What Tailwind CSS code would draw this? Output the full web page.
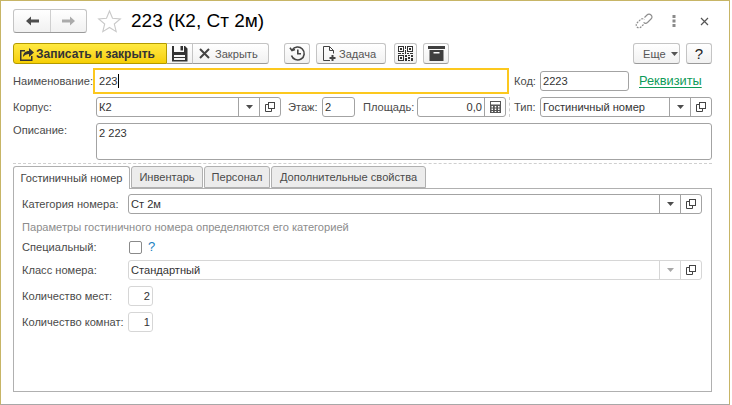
<!DOCTYPE html>
<html lang="ru"><head><meta charset="utf-8">
<script src="https://cdn.jsdelivr.net/npm/@tailwindcss/browser@4"></script>
<title>223</title></head>
<body class="m-0 bg-white">
<div class="w-[732px] h-[405px] overflow-hidden relative bg-white font-['Liberation_Sans',Arial,sans-serif] text-[11.1px] leading-[14px] text-[#4a4a4a]">
 <div class="w-[730px] h-[405px] border-l border-r border-t border-b border-l-[#c7b566] border-r-[#c7b566] border-t-[#c7b566] border-b-[#a8a8a8] pl-3 pr-[17px]">

  <!-- title -->
  <div class="flex items-center h-[24px] mt-[8px]">
   <div class="flex w-[74px] h-[24px] rounded-[3px] border border-[#c4c4c4] border-b-[#9a9a9a] bg-gradient-to-b from-white to-[#f1f1f1]">
    <div class="w-[37px] flex items-center justify-center border-r border-[#cfcfcf]">
     <svg width="15" height="12" viewBox="0 0 15 12"><path d="M1 6 L6 1.5 V4.5 H14 V7.5 H6 V10.5 Z" fill="#4d4d4d"/></svg>
    </div>
    <div class="flex-1 flex items-center justify-center">
     <svg width="15" height="12" viewBox="0 0 15 12"><path d="M14 6 L9 1.5 V4.5 H1 V7.5 H9 V10.5 Z" fill="#ababab"/></svg>
    </div>
   </div>
   <svg class="ml-[10px]" width="25" height="24" viewBox="0 0 25 24"><path d="M12.5 2 L15.5 9.3 L23.3 9.9 L17.3 15 L19.2 22.6 L12.5 18.5 L5.8 22.6 L7.7 15 L1.7 9.9 L9.5 9.3 Z" fill="#fff" stroke="#c9c9c9" stroke-width="1.1"/></svg>
   <div class="ml-[9px] text-[19px] leading-[24px] text-black whitespace-nowrap">223 (К2, Ст 2м)</div>
   <div class="ml-auto flex items-center mr-[3px]">
    <svg width="18" height="18" viewBox="0 0 18 18" fill="none" stroke="#8c8c8c" stroke-width="1.1"><path d="M9.5 5.5 L12 3 A2.8 2.8 0 0 1 16 7 L12.5 10.5 A2.8 2.8 0 0 1 8.6 10.4"/><path d="M8.5 12.5 L6 15 A2.8 2.8 0 0 1 2 11 L5.5 7.5 A2.8 2.8 0 0 1 9.4 7.6" stroke-dasharray="2 1"/></svg>
    <svg class="ml-[19px]" width="4" height="12" viewBox="0 0 4 12" fill="#8a8a8a"><rect x="0.5" y="0" width="3" height="3"/><rect x="0.5" y="4.5" width="3" height="3"/><rect x="0.5" y="9" width="3" height="3"/></svg>
    <svg class="ml-[24px]" width="9" height="9" viewBox="0 0 9 9" stroke="#555" stroke-width="1.2"><path d="M1 1 L8 8 M8 1 L1 8"/></svg>
   </div>
  </div>

  <!-- toolbar -->
  <div class="flex items-stretch h-[21px] mt-[10px]">
   <div class="w-[154px] flex items-center rounded-l-[3px] border border-[#b39a00] bg-gradient-to-b from-[#ffe93f] to-[#f6cf00] text-[#333] font-bold pl-[4px] text-[12px]">
    <svg width="17" height="17" viewBox="0 0 17 17"><path d="M2 5 H7 V6.5 H3.5 V14.5 H13 V11 H14.5 V16 H2 Z" fill="#333"/><path d="M5 12 C5 8 7.5 6 11 6 V3 L16 7.5 L11 12 V9 C8.5 9 6.5 10 5 12 Z" fill="#333"/></svg>
    <span class="ml-[1px] whitespace-nowrap">Записать и закрыть</span>
   </div>
   <div class="w-[26px] flex items-center justify-center border-y border-r border-[#c4c4c4] border-b-[#9a9a9a] bg-gradient-to-b from-white to-[#f1f1f1]">
    <svg width="17" height="17" viewBox="0 0 17 17"><path d="M1 1 H3 V7 H13 V1 H14 L16.5 3.5 V16.5 H1 Z M9.5 1 H12 V5.5 H9.5 Z M3 10 V12 H14 V10 Z M3 13 V15 H14 V13 Z" fill="#333" fill-rule="evenodd"/></svg>
   </div>
   <div class="w-[76px] flex items-center border-y border-r border-[#c4c4c4] border-b-[#9a9a9a] rounded-r-[3px] bg-gradient-to-b from-white to-[#f1f1f1] pl-[6px]">
    <svg width="11" height="11" viewBox="0 0 11 11" stroke="#444" stroke-width="2"><path d="M1 1 L10 10 M10 1 L1 10"/></svg>
    <span class="ml-[5px] text-[#555]">Закрыть</span>
   </div>
   <div class="ml-[15px] w-[26px] flex items-center justify-center rounded-[3px] border border-[#c4c4c4] border-b-[#9a9a9a] bg-gradient-to-b from-white to-[#f1f1f1]">
    <svg width="17" height="17" viewBox="0 0 17 17" fill="none" stroke="#444" stroke-width="1.6"><path d="M3.2 5 A6.5 6.5 0 1 1 2.5 10.5"/><path d="M1 2.8 L3 5.6 L6 4.6"/><path d="M8.8 4.5 V8.8 H12"/></svg>
   </div>
   <div class="ml-[6px] w-[70px] flex items-center rounded-[3px] border border-[#c4c4c4] border-b-[#9a9a9a] bg-gradient-to-b from-white to-[#f1f1f1] pl-[5px]">
    <svg width="14" height="17" viewBox="0 0 14 17" fill="none" stroke="#444"><path d="M8 15.5 H1.5 V1.5 H7.5 L11.5 5.5 V8.5"/><path d="M7.5 1.5 V5.5 H11.5"/><path d="M10.5 10 V16 M7.5 13 H13.5" stroke-width="2"/></svg>
    <span class="ml-[3px] text-[#555]">Задача</span>
   </div>
   <div class="ml-[8px] w-[23px] flex items-center justify-center rounded-[3px] border border-[#c4c4c4] border-b-[#9a9a9a] bg-gradient-to-b from-white to-[#f1f1f1]">
    <svg width="15" height="15" viewBox="0 0 15 15" fill="#333"><path d="M0 0 H6 V6 H0 Z M1 1 V5 H5 V1 Z M2 2 H4 V4 H2 Z M9 0 H15 V6 H9 Z M10 1 V5 H14 V1 Z M11 2 H13 V4 H11 Z M0 9 H6 V15 H0 Z M1 10 V14 H5 V10 Z M2 11 H4 V13 H2 Z" fill-rule="evenodd"/><path d="M7 0 H8 V3 H7 Z M7 4 H8 V8 H7 Z M0 7 H3 V8 H0 Z M4 7 H6 V8 H4 Z M9 7 H11 V8 H9 Z M12 7 H15 V8 H12 Z M7 9 H9 V11 H7 Z M10 9 H12 V10 H10 Z M13 9 H15 V11 H13 Z M10 11 H12 V13 H10 Z M7 12 H9 V15 H7 Z M13 12 H15 V15 H13 Z M10 14 H12 V15 H10 Z"/></svg>
   </div>
   <div class="ml-[6px] w-[26px] flex items-center justify-center rounded-[3px] border border-[#c4c4c4] border-b-[#9a9a9a] bg-gradient-to-b from-white to-[#f1f1f1]">
    <svg width="17" height="15" viewBox="0 0 17 15" fill="#3f3f3f"><rect x="0" y="0" width="17" height="3"/><path d="M1.5 4 H15.5 V15 H1.5 Z M5.5 6 V7.5 H11.5 V6 Z" fill-rule="evenodd"/></svg>
   </div>
   <div class="ml-auto w-[47px] flex items-center rounded-[3px] border border-[#c4c4c4] border-b-[#9a9a9a] bg-gradient-to-b from-white to-[#f1f1f1] pl-[9px] text-[#555]">
    Еще<svg class="ml-[5px]" width="7" height="4" viewBox="0 0 7 4" fill="#555"><path d="M0 0 H7 L3.5 4 Z"/></svg>
   </div>
   <div class="ml-[6px] w-[26px] flex items-center justify-center rounded-[3px] border border-[#c4c4c4] border-b-[#9a9a9a] bg-gradient-to-b from-white to-[#f1f1f1] text-[15px] text-[#222]">?</div>
  </div>

  <!-- name row -->
  <div class="flex items-center h-[26px] mt-[4px]">
   <span class="w-[80px] shrink-0 whitespace-nowrap">Наименование:</span>
   <div class="w-[416px] h-[26px] border-2 border-[#fcc81e] flex items-center pl-[4px] text-[#333]">223<span class="w-px h-[14px] bg-black"></span></div>
   <span class="ml-[5px] w-[26px]">Код:</span>
   <div class="w-[89px] h-[20px] rounded-[3px] border border-[#a3a3a3] flex items-center pl-[2px] text-[#333]">2223</div>
   <span class="ml-[10px] text-[12.8px] text-[#0e9b58] underline underline-offset-2">Реквизиты</span>
  </div>

  <!-- korpus row -->
  <div class="flex items-center h-[20px] mt-[3px]">
   <span class="w-[83px] shrink-0">Корпус:</span>
   <div class="w-[185px] h-[20px] rounded-[3px] border border-[#a3a3a3] flex items-center text-[#333]">
    <span class="flex-1 pl-[2px]">К2</span>
    <span class="w-[21px] h-full border-l border-[#a3a3a3] flex items-center justify-center"><svg width="7" height="4" viewBox="0 0 7 4" fill="#4d4d4d"><path d="M0 0 H7 L3.5 4 Z"/></svg></span>
    <span class="w-[21px] h-full border-l border-[#a3a3a3] flex items-center justify-center"><svg width="10" height="10" viewBox="0 0 10 10" fill="none" stroke="#444"><rect x="3.5" y="0.5" width="6" height="6"/><path d="M3.5 2.5 H0.5 V9.5 H6.5 V6.5"/></svg></span>
   </div>
   <span class="ml-[7px] w-[34px]">Этаж:</span>
   <div class="w-[33px] h-[20px] rounded-[3px] border border-[#a3a3a3] flex items-center pl-[2px] text-[#333]">2</div>
   <span class="ml-[8px] w-[54px]">Площадь:</span>
   <div class="w-[89px] h-[20px] rounded-[3px] border border-[#a3a3a3] flex items-center text-[#333]">
    <span class="flex-1 text-right pr-[2px]">0,0</span>
    <span class="w-[21px] h-full border-l border-[#a3a3a3] flex items-center justify-center"><svg width="11" height="12" viewBox="0 0 11 12" fill="#555"><path d="M0 0 H11 V12 H0 Z M1 1 V3.5 H10 V1 Z M1.5 5 V6.5 H3 V5 Z M4.75 5 V6.5 H6.25 V5 Z M8 5 V6.5 H9.5 V5 Z M1.5 7.5 V9 H3 V7.5 Z M4.75 7.5 V9 H6.25 V7.5 Z M8 7.5 V9 H9.5 V7.5 Z M1.5 10 V11 H3 V10 Z M4.75 10 V11 H6.25 V10 Z M8 10 V11 H9.5 V10 Z" fill-rule="evenodd"/></svg></span>
   </div>
   <span class="ml-[3px] h-[20px] border-l border-dashed border-[#cfcfcf]"></span>
   <span class="ml-[4px] w-[26px]">Тип:</span>
   <div class="w-[172px] h-[20px] rounded-[3px] border border-[#a3a3a3] flex items-center text-[#333]">
    <span class="flex-1 pl-[2px] whitespace-nowrap">Гостиничный номер</span>
    <span class="w-[21px] h-full border-l border-[#a3a3a3] flex items-center justify-center"><svg width="7" height="4" viewBox="0 0 7 4" fill="#4d4d4d"><path d="M0 0 H7 L3.5 4 Z"/></svg></span>
    <span class="w-[21px] h-full border-l border-[#a3a3a3] flex items-center justify-center"><svg width="10" height="10" viewBox="0 0 10 10" fill="none" stroke="#444"><rect x="3.5" y="0.5" width="6" height="6"/><path d="M3.5 2.5 H0.5 V9.5 H6.5 V6.5"/></svg></span>
   </div>
  </div>

  <!-- description -->
  <div class="flex h-[37px] mt-[6px]">
   <span class="w-[83px] shrink-0">Описание:</span>
   <div class="flex-1 rounded-[3px] border border-[#a3a3a3] pl-[2px] pt-[2px] text-[#333]">2 223</div>
  </div>
  <div class="border-t border-dashed border-[#cfcfcf] mt-[3px]"></div>

  <!-- tabs -->
  <div class="flex h-[23px] mt-[2px] relative z-10 -mb-px">
   <div class="w-[117px] rounded-t-[3px] border border-b-0 border-[#b0b0b0] bg-white flex items-center justify-center text-[#444]">Гостиничный номер</div>
   <div class="ml-px w-[72px] h-[22px] rounded-t-[3px] border border-[#b0b0b0] bg-[#ececec] flex items-center justify-center">Инвентарь</div>
   <div class="ml-px w-[66px] h-[22px] rounded-t-[3px] border border-[#b0b0b0] bg-[#ececec] flex items-center justify-center">Персонал</div>
   <div class="ml-px w-[155px] h-[22px] rounded-t-[3px] border border-[#b0b0b0] bg-[#ececec] flex items-center justify-center whitespace-nowrap">Дополнительные свойства</div>
  </div>

  <!-- panel -->
  <div class="w-[699px] h-[204px] border border-[#b0b0b0] pl-[8px] pr-[9px] pt-[5px]">
   <div class="flex items-center h-[20px]">
    <span class="w-[106px] shrink-0">Категория номера:</span>
    <div class="flex-1 h-[20px] rounded-[3px] border border-[#a3a3a3] flex items-center text-[#333]">
     <span class="flex-1 pl-[2px]">Ст 2м</span>
     <span class="w-[21px] h-full border-l border-[#a3a3a3] flex items-center justify-center"><svg width="7" height="4" viewBox="0 0 7 4" fill="#4d4d4d"><path d="M0 0 H7 L3.5 4 Z"/></svg></span>
     <span class="w-[21px] h-full border-l border-[#a3a3a3] flex items-center justify-center"><svg width="10" height="10" viewBox="0 0 10 10" fill="none" stroke="#444"><rect x="3.5" y="0.5" width="6" height="6"/><path d="M3.5 2.5 H0.5 V9.5 H6.5 V6.5"/></svg></span>
    </div>
   </div>
   <div class="mt-[6px] h-[14px] text-[#8c8c8c] whitespace-nowrap">Параметры гостиничного номера определяются его категорией</div>
   <div class="flex items-center h-[14px] mt-[6px]">
    <span class="w-[107px] shrink-0">Специальный:</span>
    <span class="w-[13px] h-[13px] rounded-[2px] border border-[#8a8a8a]"></span>
    <span class="ml-[6px] text-[#1a7fc0] text-[13px]">?</span>
   </div>
   <div class="flex items-center h-[20px] mt-[6px]">
    <span class="w-[106px] shrink-0">Класс номера:</span>
    <div class="flex-1 h-[20px] rounded-[3px] border border-[#d6d6d6] flex items-center text-[#333]">
     <span class="flex-1 pl-[2px]">Стандартный</span>
     <span class="w-[21px] h-full border-l border-[#d6d6d6] flex items-center justify-center"><svg width="7" height="4" viewBox="0 0 7 4" fill="#a8a8a8"><path d="M0 0 H7 L3.5 4 Z"/></svg></span>
     <span class="w-[21px] h-full border-l border-[#d6d6d6] flex items-center justify-center"><svg width="10" height="10" viewBox="0 0 10 10" fill="none" stroke="#444"><rect x="3.5" y="0.5" width="6" height="6"/><path d="M3.5 2.5 H0.5 V9.5 H6.5 V6.5"/></svg></span>
    </div>
   </div>
   <div class="flex items-center h-[20px] mt-[6px]">
    <span class="w-[106px] shrink-0">Количество мест:</span>
    <div class="w-[25px] h-[20px] rounded-[3px] border border-[#d6d6d6] flex items-center justify-end pr-[2px] text-[#333]">2</div>
   </div>
   <div class="flex items-center h-[20px] mt-[6px]">
    <span class="w-[106px] shrink-0 whitespace-nowrap">Количество комнат:</span>
    <div class="w-[25px] h-[20px] rounded-[3px] border border-[#d6d6d6] flex items-center justify-end pr-[2px] text-[#333]">1</div>
   </div>
  </div>
 </div>
</div>
</body></html>
